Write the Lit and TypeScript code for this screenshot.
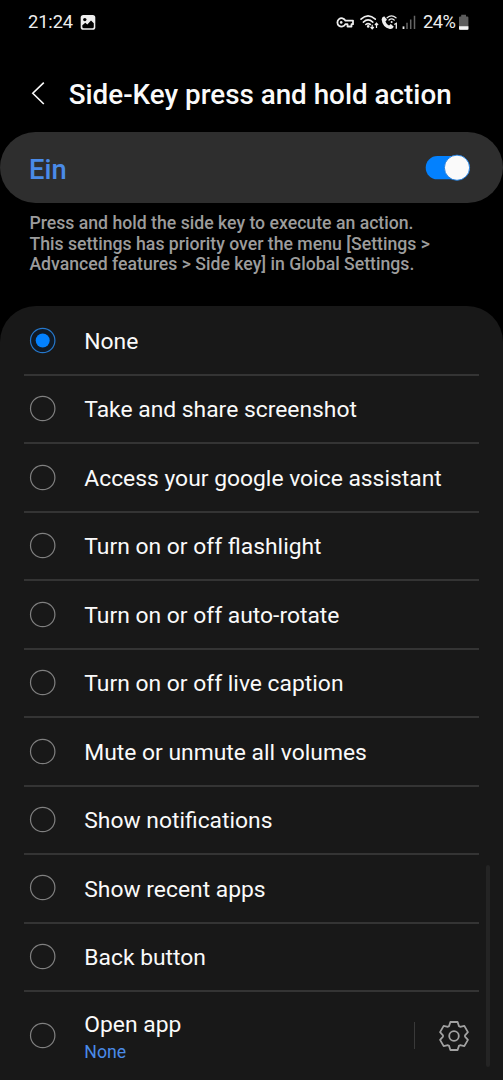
import { LitElement, html, css, svg, nothing } from "lit";
import { customElement, property, state } from "lit/decorators.js";
import { classMap } from "lit/directives/class-map.js";

interface Option {
  label: string;
  detail?: string;
}

const OPTIONS: Option[] = [
  { label: "None" },
  { label: "Take and share screenshot" },
  { label: "Access your google voice assistant" },
  { label: "Turn on or off flashlight" },
  { label: "Turn on or off auto-rotate" },
  { label: "Turn on or off live caption" },
  { label: "Mute or unmute all volumes" },
  { label: "Show notifications" },
  { label: "Show recent apps" },
  { label: "Back button" },
  { label: "Open app", detail: "None" },
];

/** Outline of a six-toothed gear centred on the origin. */
function gearPath(): string {
  const tooth = [
    [-4.9, -9.9],
    [-3.6, -14],
    [3.6, -14],
    [4.9, -9.9],
  ];
  const points: string[] = [];
  for (let i = 0; i < 6; i++) {
    const a = (i * Math.PI) / 3;
    for (const [x, y] of tooth) {
      const px = x * Math.cos(a) - y * Math.sin(a);
      const py = x * Math.sin(a) + y * Math.cos(a);
      points.push(`${px.toFixed(2)} ${py.toFixed(2)}`);
    }
  }
  return `M${points.join("L")}Z`;
}

@customElement("status-bar")
class StatusBar extends LitElement {
  static styles = css`
    :host {
      display: flex;
      justify-content: space-between;
      height: 44px;
      padding: 0 33px 0 28px;
      box-sizing: border-box;
      color: #eee;
      font-size: 18.3px;
      line-height: 44px;
    }
    .side {
      display: flex;
    }
    svg {
      display: block;
    }
    .time {
      width: 52px;
      letter-spacing: -0.1px;
    }
    .percent {
      width: 35px;
      letter-spacing: -0.5px;
    }
  `;
  render() {
    return html`
      <div class="side">
        <span class="time">21:24</span>
        <svg width="17" height="44" viewBox="80 0 17 44">
          <rect x="80.7" y="15" width="14.6" height="14.8" rx="2.6" fill="#eee" />
          <circle cx="84.8" cy="19.6" r="1.7" fill="#000" />
          <path d="M82.3 26.8V25.2L85.3 22.8L87.3 24.5L91 20.5L93.8 23.2V26.8Q93.8 28.3 92.3 28.3H83.8Q82.3 28.3 82.3 26.8Z" fill="#000" />
        </svg>
      </div>
      <div class="side">
        <svg width="88" height="44" viewBox="335 0 88 44" fill="none" stroke="#eee" stroke-width="1.8">
          <path d="M345.4 20.6A4.2 4.2 0 1 0 345.4 24.2H347.5V26.5H351.5V24.2H353V20.6Z" stroke-linejoin="round" />
          <circle cx="341.2" cy="22.4" r="1.3" fill="#eee" stroke="none" />
          <g stroke-linecap="round" stroke-width="1.6">
            <path d="M361 19.2Q368 12.6 375.3 19.2" />
            <path d="M363.4 22.1Q368 17.8 372.8 22.1" />
            <path d="M365.8 24.5Q368 22.7 370.3 24.5" />
          </g>
          <circle cx="368.2" cy="26.4" r="1.3" fill="#eee" stroke="none" />
          <path d="M372.2 24.8V28.6M370.6 27L372.2 28.8L373.8 27M376.5 28V23.4M374.9 25L376.5 23.2L378.1 25" stroke-width="1.2" />
          <path d="M384.2 16.2L387 19.8L385.4 21.6Q386.4 24.4 389 25.4L390.8 24L393.8 26.8Q392.4 29.4 389.8 29Q382.4 27.2 381.6 19.6Q381.6 17.2 384.2 16.2Z" fill="#eee" stroke="none" />
          <g stroke-width="1.3" stroke-linecap="round">
            <path d="M387.1 17.8Q391.4 14 396 17.8" />
            <path d="M389 20Q391.5 17.9 394.2 20" />
          </g>
          <circle cx="391.6" cy="21.9" r="1" fill="#eee" stroke="none" />
          <path d="M394.3 24.5L396.3 23.3V28.7" stroke-width="1.3" />
          <path d="M403.5 26.4V29" stroke-width="1.8" />
          <path d="M407 22.8V29M410.7 19.4V29M414.5 15.8V29" stroke="#666" stroke-width="1.5" />
        </svg>
        <span class="percent">24%</span>
        <svg width="12" height="44" viewBox="458 0 12 44">
          <path d="M459 30V17.5Q459 16.4 460.1 16.4H461.2V14.8H466V16.4H467.3Q468.4 16.4 468.4 17.5V30Z" fill="#5c5c5c" />
          <path d="M459 26.2H468.4V28.6Q468.4 29.8 467.2 29.8H460.2Q459 29.8 459 28.6Z" fill="#f4f4f4" />
        </svg>
      </div>
    `;
  }
}

@customElement("option-row")
class OptionRow extends LitElement {
  @property() label = "";
  @property() detail = "";
  @property({ type: Boolean }) selected = false;

  static styles = css`
    :host {
      display: flex;
      align-items: center;
      box-sizing: border-box;
      height: 65.6px;
      padding: 0 5px;
      color: #fafafa;
      font-size: 22.85px;
    }
    .radio {
      flex: none;
      display: block;
      margin-right: 28.3px;
    }
    .texts {
      flex: 1;
      display: flex;
      flex-direction: column;
      white-space: nowrap;
    }
    .label {
      line-height: 28px;
      padding-top: 3.4px;
    }
    .detail {
      color: #4a8be8;
      font-size: 17.7px;
      line-height: 27px;
    }
    .two-line {
      padding-top: 2.4px;
    }
    .rule {
      width: 1px;
      height: 27px;
      background: #393939;
      margin-right: 23px;
    }
    .gear {
      display: block;
      margin: 1px 4px 0 0;
    }
  `;
  render() {
    return html`
      <svg class="radio" width="27" height="27" viewBox="-13.7 -13.5 27 27">
        <circle r="12.2" fill=${this.selected ? "#101a26" : "none"} stroke=${this.selected ? "#2678cc" : "#808080"} stroke-width="1.2" />
        ${this.selected ? svg`<circle r="7" fill="#0381fe" />` : nothing}
      </svg>
      <div class=${classMap({ texts: true, "two-line": !!this.detail })}>
        <span class="label">${this.label}</span>
        ${this.detail ? html`<span class="detail">${this.detail}</span>` : nothing}
      </div>
      ${this.detail
        ? html`<div class="rule"></div>
            <svg class="gear" width="32" height="32" viewBox="-16 -16 32 32" fill="none" stroke="#a2a2a2" stroke-width="1.8" stroke-linejoin="round">
              <path d=${gearPath()} />
              <circle r="4.8" />
            </svg>`
        : nothing}
    `;
  }
}

@customElement("app-root")
class AppRoot extends LitElement {
  @state() private selected = 0;

  static styles = css`
    :host {
      display: flex;
      flex-direction: column;
      height: 1080px;
      overflow: hidden;
      position: relative;
      background: #000;
      font-family: Roboto, "Liberation Sans", sans-serif;
    }
    .header {
      display: flex;
      align-items: center;
      height: 88px;
      padding: 12px 0 0 31px;
      box-sizing: border-box;
      color: #fafafa;
    }
    .back {
      display: block;
      margin-right: 21.7px;
    }
    .title {
      margin: 0;
      padding-top: 2px;
      font-size: 27.8px;
      font-weight: 500;
      line-height: 34px;
      white-space: nowrap;
    }
    .master {
      display: flex;
      align-items: center;
      justify-content: space-between;
      height: 71px;
      padding: 0 32px 0 29px;
      box-sizing: border-box;
      border-radius: 36px;
      background: #2e2e2e;
    }
    .on {
      color: #4a8be8;
      font-size: 27.3px;
      font-weight: 500;
      padding-top: 4px;
    }
    .switch {
      display: block;
    }
    .help {
      margin: 0;
      height: 103px;
      box-sizing: border-box;
      padding: 10px 0 0 29.4px;
      color: #9c9c9c;
      font-size: 17.67px;
      font-weight: 500;
      line-height: 20.5px;
      white-space: nowrap;
    }
    .list {
      flex: 1;
      padding: 1.4px 24px 0;
      background: #181818;
      border-radius: 36px 36px 0 0;
    }
    .item {
      display: block;
      border-bottom: 2px solid #343434;
      box-sizing: border-box;
      height: 68.48px;
    }
    .item.last {
      border: 0;
      height: 86.6px;
    }
    .item.last option-row {
      height: 86.6px;
    }
    .scrollbar {
      position: absolute;
      right: 13px;
      top: 865px;
      width: 4px;
      height: 202px;
      border-radius: 2px;
      background: #242424;
    }
  `;
  render() {
    return html`
      <status-bar></status-bar>
      <div class="header">
        <svg class="back" width="16" height="26" viewBox="31 81 16 26" fill="none" stroke="#fafafa" stroke-width="1.6">
          <path d="M43.8 82.6L32.8 93.3L43.8 104" />
        </svg>
        <h1 class="title">Side-Key press and hold action</h1>
      </div>
      <div class="master">
        <span class="on">Ein</span>
        <svg class="switch" width="46" height="28" viewBox="425 154 46 28">
          <rect x="425.7" y="156" width="44" height="23.3" rx="11.6" fill="#0381fe" />
          <circle cx="457" cy="167.7" r="12.6" fill="#fafafa" stroke="#1678dc" stroke-width="0.9" />
        </svg>
      </div>
      <p class="help">
        Press and hold the side key to execute an action.<br />This settings has priority over the menu [Settings &gt;<br />Advanced features &gt; Side key] in Global Settings.
      </p>
      <div class="list">
        ${OPTIONS.map(
          (o, i) => html`<div class=${classMap({ item: true, last: i === OPTIONS.length - 1 })}>
            <option-row
              .label=${o.label}
              .detail=${o.detail ?? ""}
              ?selected=${i === this.selected}
              @click=${() => (this.selected = i)}
            ></option-row>
          </div>`
        )}
      </div>
      <div class="scrollbar"></div>
    `;
  }
}
